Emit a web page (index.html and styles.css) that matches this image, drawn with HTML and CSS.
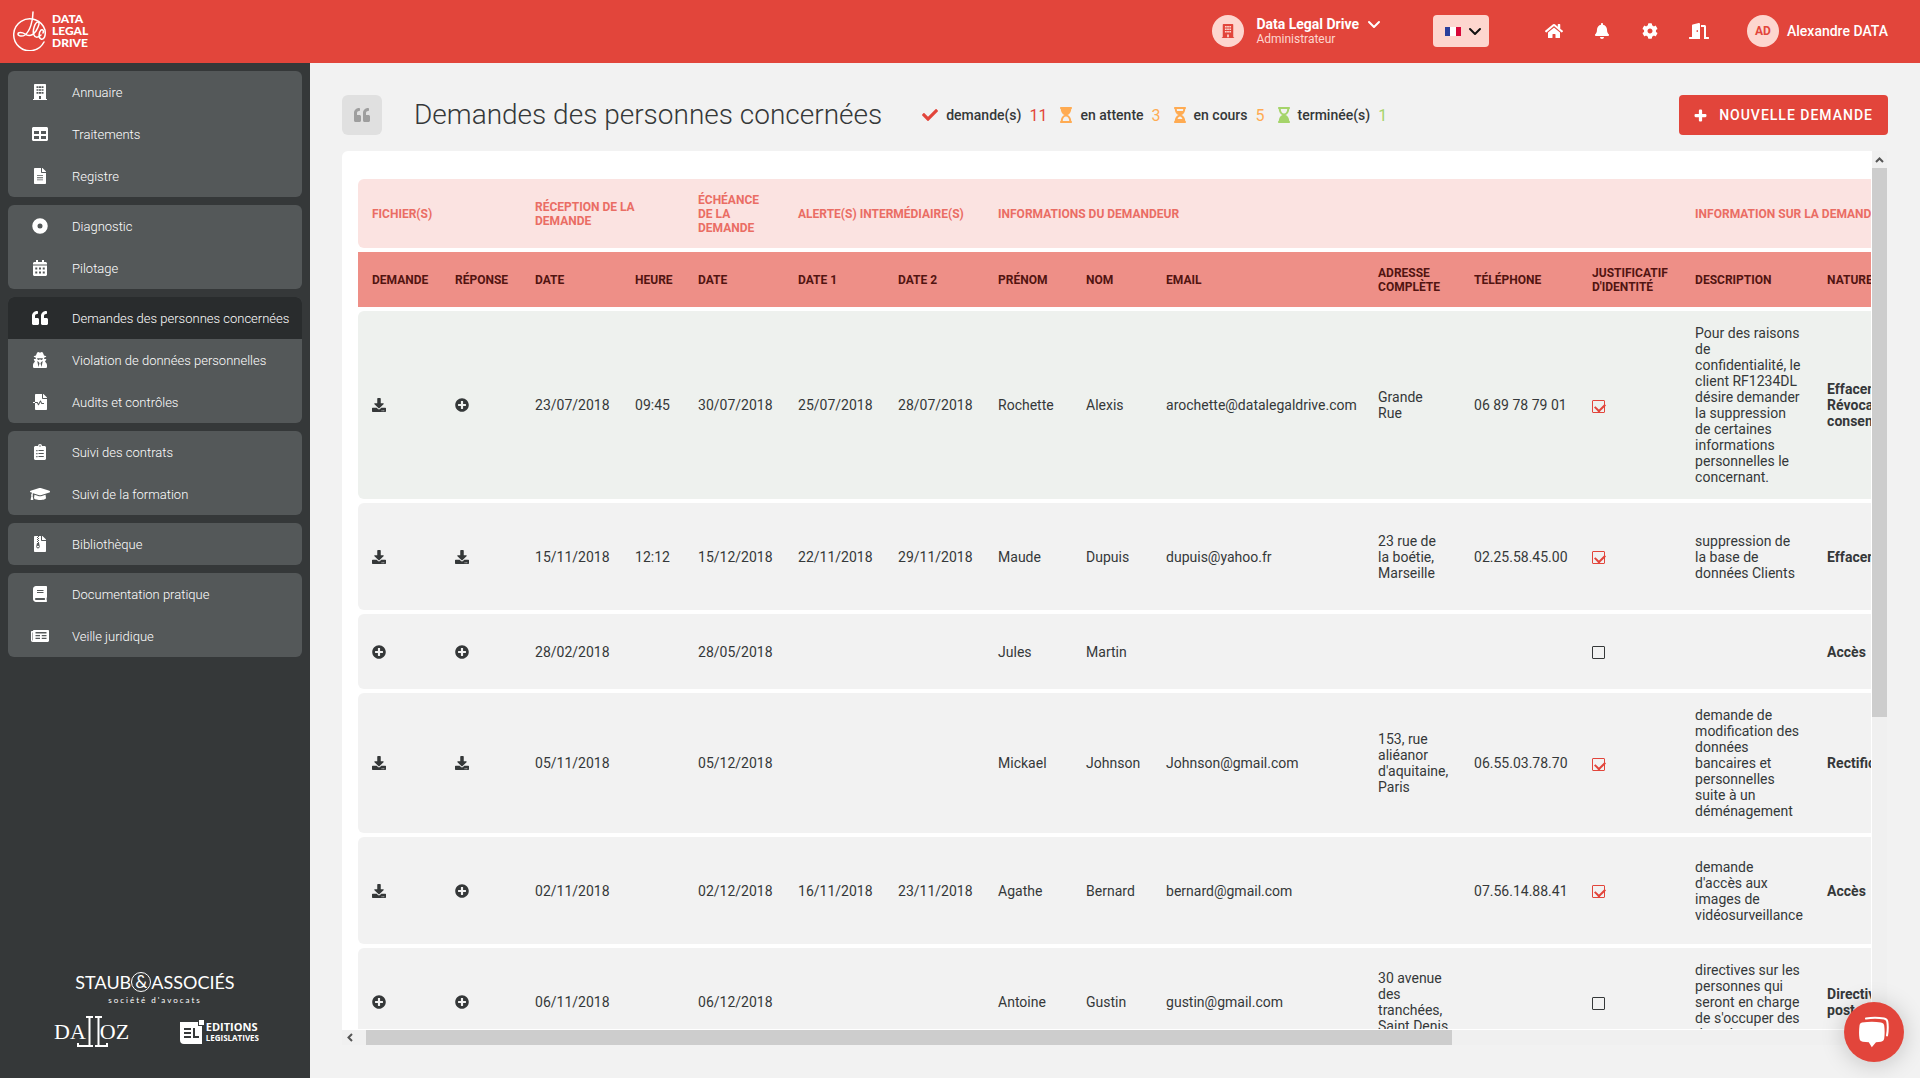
FILE: index.html
```html
<!DOCTYPE html>
<html lang="fr">
<head>
<meta charset="utf-8">
<meta name="viewport" content="width=device-width, initial-scale=1">
<title>Demandes des personnes concernées</title>
<link rel="stylesheet" href="styles.css">
</head>
<body>
<svg class="sprite" aria-hidden="true">
  <symbol id="i-building" viewBox="0 0 448 512"><path fill-rule="evenodd" d="M436 480h-20V24c0-13-11-24-24-24H56C43 0 32 11 32 24v456H12c-7 0-12 5-12 12v20h448v-20c0-7-5-12-12-12zM112 72h64v52h-64zm0 92h64v52h-64zm0 92h64v52h-64zm80-184h64v52h-64zm0 92h64v52h-64zm0 92h64v52h-64zm80-184h64v52h-64zm0 92h64v52h-64zm0 92h64v52h-64zM192 384h64v96h-64z"/></symbol>
  <symbol id="i-table" viewBox="0 0 512 512"><path fill-rule="evenodd" d="M464 32H48C22 32 0 54 0 80v352c0 26 22 48 48 48h416c26 0 48-22 48-48V80c0-26-22-48-48-48zM224 416H64v-96h160zm0-160H64v-96h160zm224 160H288v-96h160zm0-160H288v-96h160z"/></symbol>
  <symbol id="i-file" viewBox="0 0 384 512"><path fill-rule="evenodd" d="M224 136V0H24C11 0 0 11 0 24v464c0 13 11 24 24 24h336c13 0 24-11 24-24V160H248c-13 0-24-11-24-24zm64 256H96v-28h192zm0-68H96v-28h192zm0-68H96v-28h192zM384 122v6H256V0h6c6 0 13 3 17 7l98 98c4 4 7 11 7 17z"/></symbol>
  <symbol id="i-disc" viewBox="0 0 512 512"><path fill-rule="evenodd" d="M256 8a248 248 0 1 0 0 496 248 248 0 0 0 0-496zm0 168a80 80 0 1 1 0 160 80 80 0 0 1 0-160z"/></symbol>
  <symbol id="i-calendar" viewBox="0 0 448 512"><path fill-rule="evenodd" d="M0 464c0 26 22 48 48 48h352c26 0 48-22 48-48V176H0zM72 240h64v60H72zm120 0h64v60h-64zm120 0h64v60h-64zM72 368h64v60H72zm120 0h64v60h-64zm120 0h64v60h-64zM448 144v-32c0-26-22-48-48-48h-48V12c0-7-5-12-12-12h-40c-7 0-12 5-12 12v52H160V12c0-7-5-12-12-12h-40c-7 0-12 5-12 12v52H48C22 64 0 86 0 112v32z"/></symbol>
  <symbol id="i-quote" viewBox="0 0 512 512"><path d="M464 256h-80v-64c0-35.3 28.7-64 64-64h8c13.3 0 24-10.7 24-24V56c0-13.3-10.7-24-24-24h-8c-88.4 0-160 71.6-160 160v240c0 26.5 21.5 48 48 48h128c26.5 0 48-21.5 48-48V304c0-26.5-21.5-48-48-48zm-288 0H96v-64c0-35.3 28.7-64 64-64h8c13.3 0 24-10.7 24-24V56c0-13.3-10.7-24-24-24h-8C71.6 32 0 103.6 0 192v240c0 26.5 21.5 48 48 48h128c26.5 0 48-21.5 48-48V304c0-26.5-21.5-48-48-48z"/></symbol>
  <symbol id="i-secret" viewBox="0 0 448 512"><path fill-rule="evenodd" d="M384 312l40-72c4-8-2-16-12-16h-58c6-20 8-30 8-48 40-9 62-20 62-32 0-14-28-26-72-35C340 64 318 20 300 5c-10-8-24-6-34-1l-26 13c-10 5-22 5-32 0L182 4c-10-5-24-7-34 1-18 15-40 59-52 104-44 9-72 21-72 35 0 12 22 23 62 32 0 18 2 28 8 48H38c-10 0-16 10-13 18l37 72C24 336 0 378 0 426v42c0 24 20 44 44 44h360c24 0 44-20 44-44v-42c0-48-25-90-64-114zM176 480l-40-192 48 32 24 40zm96 0l-32-120 24-40 48-32zM130 200h188c-4 40-26 52-50 52-22 0-34-12-38-30h-12c-4 18-16 30-38 30-24 0-46-12-50-52z"/></symbol>
  <symbol id="i-audit" viewBox="0 0 448 512"><path fill-rule="evenodd" d="M288 136V0H88C75 0 64 11 64 24v232h76c5 0 9 3 11 6l25 50 48-94c6-12 23-12 29 0l35 70h64v32h-74c-5 0-9-3-11-6l-29-58-48 94c-6 12-23 12-29 0l-35-62H64v200c0 13 11 24 24 24h336c13 0 24-11 24-24V160H312c-13 0-24-11-24-24zM0 264c0-4 4-8 8-8h56v32H8c-4 0-8-4-8-8zM448 122v6H320V0h6c6 0 13 3 17 7l98 98c4 4 7 11 7 17z"/></symbol>
  <symbol id="i-clipboard" viewBox="0 0 384 512"><path fill-rule="evenodd" d="M336 64h-80a64 64 0 0 0-128 0H48C22 64 0 86 0 112v352c0 26 22 48 48 48h288c26 0 48-22 48-48V112c0-26-22-48-48-48zM192 40a24 24 0 1 1 0 48 24 24 0 0 1 0-48zM72 192h40v36H72zm72 0h168v32H144zM72 288h40v36H72zm72 0h168v32H144zM72 384h40v36H72zm72 0h168v32H144z"/></symbol>
  <symbol id="i-cap" viewBox="0 0 640 512"><path d="M622 153L343 67c-15-5-31-5-46 0L18 153c-24 7-24 39 0 46l49 15c-11 14-18 30-19 48-9 6-16 15-16 26 0 10 6 19 14 25L20 428c-2 10 5 20 16 20h56c11 0 18-10 16-20L82 313c8-6 14-15 14-25 0-11-6-20-15-25 1-13 7-24 17-31l199 61c9 3 26 6 46 0l279-86c24-8 24-46 0-54zM352 324c-31 9-55 4-64 0l-145-45-15 105c0 35 86 64 192 64s192-29 192-64l-15-105z"/></symbol>
  <symbol id="i-zip" viewBox="0 0 384 512"><path fill-rule="evenodd" d="M224 136V0h-64v32h-32V0H24C11 0 0 11 0 24v464c0 13 11 24 24 24h336c13 0 24-11 24-24V160H248c-13 0-24-11-24-24zM96 32h32v32H96zm32 32h32v32h-32zM96 96h32v32H96zm32 32h32v32h-32zM96 160h32v32H96zm32 32h32v32h-32zM96 224h66l20 98c10 50-28 78-54 78-28 0-64-28-54-78zm32 90a32 24 0 1 0 0 50 32 24 0 0 0 0-50zM384 122v6H256V0h6c6 0 13 3 17 7l98 98c4 4 7 11 7 17z"/></symbol>
  <symbol id="i-book" viewBox="0 0 448 512"><path fill-rule="evenodd" d="M448 360V24c0-13-11-24-24-24H96C43 0 0 43 0 96v320c0 53 43 96 96 96h328c13 0 24-11 24-24v-16c0-8-4-14-9-19-4-15-4-59 0-74 5-4 9-11 9-19zM128 128h208v28H128zm0 64h208v28H128zm253 256H96c-43 0-43-64 0-64h285c-2 17-2 47 0 64z"/></symbol>
  <symbol id="i-news" viewBox="0 0 576 512"><path fill-rule="evenodd" d="M552 64H88c-13 0-24 11-24 24v8H24c-13 0-24 11-24 24v272c0 31 25 56 56 56h472c26 0 48-22 48-48V88c0-13-11-24-24-24zM56 400c-4 0-8-4-8-8V144h16v248c0 4-4 8-8 8zm88-272h352v48H144zm0 96h144v40H144zm0 88h144v40H144zm200-88h152v40H344zm0 88h152v40H344z"/></symbol>
  <symbol id="i-home" viewBox="0 0 576 512"><path d="M280.37 148.26L96 300.11V464a16 16 0 0 0 16 16l112.06-.29a16 16 0 0 0 15.92-16V368a16 16 0 0 1 16-16h64a16 16 0 0 1 16 16v95.64a16 16 0 0 0 16 16.05L464 480a16 16 0 0 0 16-16V300L295.67 148.26a12.19 12.19 0 0 0-15.3 0zM571.6 251.47L488 182.56V44.05a12 12 0 0 0-12-12h-56a12 12 0 0 0-12 12v72.61L318.47 43a48 48 0 0 0-61 0L4.34 251.47a12 12 0 0 0-1.6 16.9l25.5 31A12 12 0 0 0 45.15 301l235.22-193.74a12.19 12.19 0 0 1 15.3 0L530.9 301a12 12 0 0 0 16.9-1.6l25.5-31a12 12 0 0 0-1.7-16.93z"/></symbol>
  <symbol id="i-bell" viewBox="0 0 448 512"><path d="M224 512c35.32 0 63.97-28.65 63.97-64H160.03c0 35.35 28.65 64 63.97 64zm215.39-149.71c-19.32-20.76-55.47-51.99-55.47-154.29 0-77.7-54.48-139.9-127.94-155.16V32c0-17.67-14.32-32-31.98-32s-31.98 14.33-31.98 32v20.84C118.56 68.1 64.08 130.3 64.08 208c0 102.3-36.15 133.53-55.47 154.29-6 6.45-8.66 14.16-8.61 21.71.11 16.4 12.98 32 32.1 32h383.8c19.12 0 32-15.6 32.1-32 .05-7.55-2.61-15.27-8.61-21.71z"/></symbol>
  <symbol id="i-cog" viewBox="0 0 512 512"><path d="M487.4 315.7l-42.6-24.6c4.3-23.2 4.3-47 0-70.2l42.6-24.6c4.9-2.8 7.1-8.6 5.5-14-11.1-35.6-30-67.8-54.7-94.6-3.8-4.1-10-5.1-14.8-2.3L380.8 110c-17.9-15.4-38.5-27.3-60.8-35.1V25.8c0-5.6-3.9-10.5-9.4-11.7-36.7-8.2-74.3-7.8-109.2 0-5.5 1.2-9.4 6.1-9.4 11.7V75c-22.2 7.9-42.8 19.8-60.8 35.1L88.7 85.5c-4.9-2.8-11-1.9-14.8 2.3-24.7 26.7-43.6 58.9-54.7 94.6-1.7 5.4.6 11.2 5.5 14L67.3 221c-4.3 23.2-4.3 47 0 70.2l-42.6 24.6c-4.9 2.8-7.1 8.6-5.5 14 11.1 35.6 30 67.8 54.7 94.6 3.8 4.1 10 5.1 14.8 2.3l42.6-24.6c17.9 15.4 38.5 27.3 60.8 35.1v49.2c0 5.6 3.9 10.5 9.4 11.7 36.7 8.2 74.3 7.8 109.2 0 5.5-1.2 9.4-6.1 9.4-11.7v-49.2c22.2-7.9 42.8-19.8 60.8-35.1l42.6 24.6c4.9 2.8 11 1.9 14.8-2.3 24.7-26.7 43.6-58.9 54.7-94.6 1.5-5.5-.7-11.3-5.6-14.1zM256 336c-44.1 0-80-35.9-80-80s35.9-80 80-80 80 35.9 80 80-35.9 80-80 80z"/></symbol>
  <symbol id="i-door" viewBox="0 0 640 512"><path fill-rule="evenodd" d="M624 448h-80V113c0-27-21-49-48-49H384v64h96v384h144c9 0 16-7 16-16v-32c0-9-7-16-16-16zM312 1L120 50c-14 4-24 16-24 31v367H16c-9 0-16 7-16 16v32c0 9 7 16 16 16h336V33c0-21-20-37-40-32zM264 288c-13 0-24-14-24-32s11-32 24-32 24 14 24 32-11 32-24 32z"/></symbol>
  <symbol id="i-chevron" viewBox="0 0 14 9"><path fill="none" stroke="currentColor" stroke-width="2" stroke-linecap="round" stroke-linejoin="round" d="M2 2l5 5 5-5"/></symbol>
  <symbol id="i-check" viewBox="0 0 512 512"><path d="M173.900 439.400L7.500 273c-10-10-10-26.200 0-36.200l36.200-36.200c10-10 26.200-10 36.200 0L192 312.700 432.100 72.600c10-10 26.200-10 36.200 0l36.200 36.200c10 10 10 26.200 0 36.200L210.100 439.400c-10 10-26.200 10-36.200 0z"/></symbol>
  <symbol id="i-glass-start" viewBox="0 0 384 512"><path fill-rule="evenodd" d="M360 0H24C11 0 0 11 0 24v16c0 13 11 24 24 24 0 91 51 167 121 192C75 281 24 357 24 448c-13 0-24 11-24 24v16c0 13 11 24 24 24h336c13 0 24-11 24-24v-16c0-13-11-24-24-24 0-91-51-167-121-192 70-25 121-101 121-192 13 0 24-11 24-24V24c0-13-11-24-24-24zM88 448c0-78 46-144 104-144s104 66 104 144z"/></symbol>
  <symbol id="i-glass-half" viewBox="0 0 384 512"><path fill-rule="evenodd" d="M360 0H24C11 0 0 11 0 24v16c0 13 11 24 24 24 0 91 51 167 121 192C75 281 24 357 24 448c-13 0-24 11-24 24v16c0 13 11 24 24 24h336c13 0 24-11 24-24v-16c0-13-11-24-24-24 0-91-51-167-121-192 70-25 121-101 121-192 13 0 24-11 24-24V24c0-13-11-24-24-24zM88 64h208c0 24-4 46-12 66H100c-8-20-12-42-12-66zm24 320c18-48 47-80 80-80s62 32 80 80z"/></symbol>
  <symbol id="i-glass-end" viewBox="0 0 384 512"><path fill-rule="evenodd" d="M360 0H24C11 0 0 11 0 24v16c0 13 11 24 24 24 0 91 51 167 121 192C75 281 24 357 24 448c-13 0-24 11-24 24v16c0 13 11 24 24 24h336c13 0 24-11 24-24v-16c0-13-11-24-24-24 0-91-51-167-121-192 70-25 121-101 121-192 13 0 24-11 24-24V24c0-13-11-24-24-24zM88 64h208c0 78-46 144-104 144S88 142 88 64z"/></symbol>
  <symbol id="i-plus" viewBox="0 0 12 12"><path d="M5.500 0.500h1a1 1 0 0 1 1 1v3h3a1 1 0 0 1 1 1v1a1 1 0 0 1-1 1h-3v3a1 1 0 0 1-1 1h-1a1 1 0 0 1-1-1v-3h-3a1 1 0 0 1-1-1v-1a1 1 0 0 1 1-1h3v-3a1 1 0 0 1 1-1z"/></symbol>
  <symbol id="i-add" viewBox="0 0 512 512"><path d="M256 8C119 8 8 119 8 256s111 248 248 248 248-111 248-248S393 8 256 8zm144 276c0 6.600-5.400 12-12 12h-92v92c0 6.600-5.400 12-12 12h-56c-6.600 0-12-5.400-12-12v-92h-92c-6.600 0-12-5.400-12-12v-56c0-6.600 5.400-12 12-12h92v-92c0-6.600 5.400-12 12-12h56c6.600 0 12 5.400 12 12v92h92c6.600 0 12 5.400 12 12v56z"/></symbol>
  <symbol id="i-download" viewBox="0 0 512 512"><path d="M216 0h80c13.300 0 24 10.700 24 24v168h87.700c17.800 0 26.700 21.500 14.100 34.100L269.700 378.300c-7.500 7.500-19.800 7.500-27.300 0L90.100 226.100c-12.600-12.600-3.700-34.100 14.100-34.100H192V24c0-13.300 10.700-24 24-24zm296 376v112c0 13.300-10.700 24-24 24H24c-13.300 0-24-10.700-24-24V376c0-13.300 10.700-24 24-24h146.700l49 49c20.100 20.100 52.500 20.100 72.600 0l49-49H488c13.300 0 24 10.700 24 24zm-124 88c0-11-9-20-20-20s-20 9-20 20 9 20 20 20 20-9 20-20zm64 0c0-11-9-20-20-20s-20 9-20 20 9 20 20 20 20-9 20-20z"/></symbol>
</svg>

<header class="topbar">
  <a class="brand" href="#" aria-label="Data Legal Drive">
    <svg class="brand-mark" viewBox="0 0 34 40" aria-hidden="true"><g fill="none" stroke="#fff" stroke-width="1.500" stroke-linecap="round"><path d="M32 31A16 16 0 1 1 33 19c1 6-1 10-4 9s-2-7 0-9c2-1 3 1 2 3"/><path d="M21 1c0 9-3 19-8 23-3 2-7 1-7-1s4-2 7 0c4 3 8 1 11-3 3-5 4-9 2-9-3 0-6 9-4 13 1 3 4 3 7 0"/></g></svg>
    <span class="brand-name">DATA<br>LEGAL<br>DRIVE</span>
  </a>
  <div class="top-tools">
    <button class="company" type="button">
      <span class="avatar"><svg class="ic14"><use href="#i-building"/></svg></span>
      <span class="company-text"><strong>Data Legal Drive <svg class="chev"><use href="#i-chevron"/></svg></strong><small>Administrateur</small></span>
    </button>
    <div class="lang">
      <svg class="flag" viewBox="0 0 16 9" aria-hidden="true"><path fill="#fff" d="M0 0h16v9H0z"/><path fill="#2b3f9c" d="M0 0h5v9H0z"/><path fill="#d8083a" d="M11 0h5v9h-5z"/></svg>
      <svg class="chev"><use href="#i-chevron"/></svg>
      <select aria-label="Langue"><option></option></select>
    </div>
    <nav class="shortcuts" aria-label="Raccourcis">
      <a href="#" aria-label="Accueil"><svg><use href="#i-home"/></svg></a>
      <a href="#" aria-label="Notifications"><svg><use href="#i-bell"/></svg></a>
      <a href="#" aria-label="Paramètres"><svg><use href="#i-cog"/></svg></a>
      <a href="#" aria-label="Déconnexion"><svg><use href="#i-door"/></svg></a>
    </nav>
    <a class="user" href="#"><span class="avatar">AD</span>Alexandre DATA</a>
  </div>
</header>

<div class="layout">
  <aside class="sidebar">
    <nav class="menu" aria-label="Menu principal">
      <div class="menu-group">
        <a href="#"><svg><use href="#i-building"/></svg>Annuaire</a>
        <a href="#"><svg><use href="#i-table"/></svg>Traitements</a>
        <a href="#"><svg><use href="#i-file"/></svg>Registre</a>
      </div>
      <div class="menu-group">
        <a href="#"><svg><use href="#i-disc"/></svg>Diagnostic</a>
        <a href="#"><svg><use href="#i-calendar"/></svg>Pilotage</a>
      </div>
      <div class="menu-group">
        <a class="active" href="#" aria-current="page"><svg><use href="#i-quote"/></svg>Demandes des personnes concernées</a>
        <a href="#"><svg><use href="#i-secret"/></svg>Violation de données personnelles</a>
        <a href="#"><svg><use href="#i-audit"/></svg>Audits et contrôles</a>
      </div>
      <div class="menu-group">
        <a href="#"><svg><use href="#i-clipboard"/></svg>Suivi des contrats</a>
        <a href="#"><svg><use href="#i-cap"/></svg>Suivi de la formation</a>
      </div>
      <div class="menu-group">
        <a href="#"><svg><use href="#i-zip"/></svg>Bibliothèque</a>
      </div>
      <div class="menu-group">
        <a href="#"><svg><use href="#i-book"/></svg>Documentation pratique</a>
        <a href="#"><svg><use href="#i-news"/></svg>Veille juridique</a>
      </div>
    </nav>
    <div class="partners">
      <div class="staub">
        <div class="staub-name">STAUB<span class="amp">&amp;</span>ASSOCIÉS</div>
        <div class="staub-sub">société d'avocats</div>
      </div>
      <div class="partners-row">
        <div class="dalloz">
          <span>DA</span>
          <svg viewBox="0 0 32 32" aria-hidden="true"><path fill="none" stroke="#fff" stroke-width="2" d="M10 1h7M19 1h7M13.500 1v29M22.500 1v29M17 30H2v-3M19 30h12v-3"/></svg>
          <span>OZ</span>
        </div>
        <div class="editions">
          <svg viewBox="0 0 24 24" aria-hidden="true"><path fill="#fff" d="M0 2h18v4h4v18H4a4 4 0 0 1-4-4zM19 0h5v5h-5z"/><path fill="none" stroke="#353839" stroke-width="2" d="M4 9h7M4 13h7M4 17h7M14 8v9h5"/></svg>
          <span><b>EDITIONS</b><i>LEGISLATIVES</i></span>
        </div>
      </div>
    </div>
  </aside>

  <main class="main">
    <div class="page-head">
      <span class="page-icon"><svg><use href="#i-quote"/></svg></span>
      <h1>Demandes des personnes concernées</h1>
      <ul class="stats">
        <li class="red"><svg><use href="#i-check"/></svg>demande(s) <b>11</b></li>
        <li class="orange"><svg><use href="#i-glass-start"/></svg>en attente <b>3</b></li>
        <li class="orange"><svg><use href="#i-glass-half"/></svg>en cours <b>5</b></li>
        <li class="green"><svg><use href="#i-glass-end"/></svg>terminée(s) <b>1</b></li>
      </ul>
      <button class="primary" type="button"><svg><use href="#i-plus"/></svg>NOUVELLE DEMANDE</button>
    </div>

    <div class="panel">
      <div class="viewport">
        <table>
          <colgroup>
            <col class="c-file"><col class="c-answer"><col class="c-date"><col class="c-hour"><col class="c-date"><col class="c-date"><col class="c-date"><col class="c-first"><col class="c-last"><col class="c-mail"><col class="c-addr"><col class="c-tel"><col class="c-proof"><col class="c-desc"><col class="c-nature">
          </colgroup>
          <thead>
            <tr class="groups">
              <th colspan="2">FICHIER(S)</th><th colspan="2">RÉCEPTION DE LA DEMANDE</th><th>ÉCHÉANCE DE LA DEMANDE</th><th colspan="2">ALERTE(S) INTERMÉDIAIRE(S)</th><th colspan="6">INFORMATIONS DU DEMANDEUR</th><th colspan="2">INFORMATION SUR LA DEMANDE</th>
            </tr>
            <tr class="heads">
              <th>DEMANDE</th><th>RÉPONSE</th><th>DATE</th><th>HEURE</th><th>DATE</th><th>DATE 1</th><th>DATE 2</th><th>PRÉNOM</th><th>NOM</th><th>EMAIL</th><th>ADRESSE COMPLÈTE</th><th>TÉLÉPHONE</th><th>JUSTIFICATIF D'IDENTITÉ</th><th>DESCRIPTION</th><th>NATURE</th>
            </tr>
          </thead>
          <tbody>
            <tr class="new">
              <td><button type="button" aria-label="Télécharger"><svg><use href="#i-download"/></svg></button></td><td><button type="button" aria-label="Ajouter"><svg><use href="#i-add"/></svg></button></td>
              <td>23/07/2018</td><td>09:45</td><td>30/07/2018</td><td>25/07/2018</td><td>28/07/2018</td><td>Rochette</td><td>Alexis</td><td>arochette@datalegaldrive.com</td><td>Grande<br>Rue</td><td class="tel">06 89 78 79 01</td><td><input type="checkbox" aria-label="Justificatif d'identité" checked></td><td>Pour des raisons de confidentialité, le client RF1234DL désire demander la suppression de certaines informations personnelles le concernant.</td><td><b>Effacement Révocation du consentement</b></td>
            </tr>
            <tr class="tall">
              <td><button type="button" aria-label="Télécharger"><svg><use href="#i-download"/></svg></button></td><td><button type="button" aria-label="Télécharger"><svg><use href="#i-download"/></svg></button></td>
              <td>15/11/2018</td><td>12:12</td><td>15/12/2018</td><td>22/11/2018</td><td>29/11/2018</td><td>Maude</td><td>Dupuis</td><td>dupuis@yahoo.fr</td><td>23 rue de la boétie, Marseille</td><td class="tel">02.25.58.45.00</td><td><input type="checkbox" aria-label="Justificatif d'identité" checked></td><td>suppression de la base de données Clients</td><td><b>Effacement</b></td>
            </tr>
            <tr>
              <td><button type="button" aria-label="Ajouter"><svg><use href="#i-add"/></svg></button></td><td><button type="button" aria-label="Ajouter"><svg><use href="#i-add"/></svg></button></td>
              <td>28/02/2018</td><td></td><td>28/05/2018</td><td></td><td></td><td>Jules</td><td>Martin</td><td></td><td></td><td></td><td><input type="checkbox" aria-label="Justificatif d'identité"></td><td></td><td><b>Accès</b></td>
            </tr>
            <tr>
              <td><button type="button" aria-label="Télécharger"><svg><use href="#i-download"/></svg></button></td><td><button type="button" aria-label="Télécharger"><svg><use href="#i-download"/></svg></button></td>
              <td>05/11/2018</td><td></td><td>05/12/2018</td><td></td><td></td><td>Mickael</td><td>Johnson</td><td>Johnson@gmail.com</td><td>153, rue aliéanor d'aquitaine, Paris</td><td class="tel">06.55.03.78.70</td><td><input type="checkbox" aria-label="Justificatif d'identité" checked></td><td>demande de modification des données bancaires et personnelles suite à un déménagement</td><td><b>Rectification</b></td>
            </tr>
            <tr class="tall">
              <td><button type="button" aria-label="Télécharger"><svg><use href="#i-download"/></svg></button></td><td><button type="button" aria-label="Ajouter"><svg><use href="#i-add"/></svg></button></td>
              <td>02/11/2018</td><td></td><td>02/12/2018</td><td>16/11/2018</td><td>23/11/2018</td><td>Agathe</td><td>Bernard</td><td>bernard@gmail.com</td><td></td><td class="tel">07.56.14.88.41</td><td><input type="checkbox" aria-label="Justificatif d'identité" checked></td><td>demande d'accès aux images de vidéosurveillance</td><td><b>Accès</b></td>
            </tr>
            <tr class="tall">
              <td><button type="button" aria-label="Ajouter"><svg><use href="#i-add"/></svg></button></td><td><button type="button" aria-label="Ajouter"><svg><use href="#i-add"/></svg></button></td>
              <td>06/11/2018</td><td></td><td>06/12/2018</td><td></td><td></td><td>Antoine</td><td>Gustin</td><td>gustin@gmail.com</td><td>30 avenue des tranchées, Saint&nbsp;Denis</td><td></td><td><input type="checkbox" aria-label="Justificatif d'identité"></td><td>directives sur les personnes qui seront en charge de s'occuper des données</td><td><b>Directives<br>post-mortem</b></td>
            </tr>
          </tbody>
        </table>
      </div>
      <div class="vbar" aria-hidden="true"><svg viewBox="0 0 9 6"><path fill="none" stroke="#555" stroke-width="2" d="M1 5l3.500-3.500L8 5"/></svg><span></span></div>
      <div class="hbar" aria-hidden="true"><svg viewBox="0 0 6 9"><path fill="none" stroke="#555" stroke-width="2" d="M5 1L1.500 4.500 5 8"/></svg><span></span></div>
    </div>
  </main>
</div>

<button class="chat" type="button" aria-label="Ouvrir la messagerie">
  <svg viewBox="0 0 32 32" aria-hidden="true"><path fill="none" stroke="#fff" stroke-width="2" stroke-linecap="round" d="M8 2.500c6-1 12-1 18 0 2 .3 3 1.500 3.300 3 .8 5 .8 8-.3 14"/><path fill="#fff" d="M4 6.500c7-1 13-1 19 0 2 .3 3 1.500 3.200 3 .6 5 .6 9 0 13-.3 1.800-1.500 3-3.200 3.200l-5 .6-4.200 5-3-5-6-.6c-2-.2-3-1.400-3.300-3.200-.6-4-.6-8 0-13 .2-1.500 1-2.700 2.500-3z"/></svg>
</button>
</body>
</html>
```

FILE: styles.css
```css
:root {
  --red: #e2453b;
  --dark: #353839;
  --pink: #fdd6cf;
  --grey: #f2f2f2;
}

* { box-sizing: border-box; }

body {
  margin: 0;
  height: 100vh;
  display: flex;
  flex-direction: column;
  overflow: hidden;
  background: var(--grey);
  color: var(--dark);
  font-family: Roboto, "Liberation Sans", sans-serif;
  font-size: 14px;
}

svg { display: block; fill: currentColor; flex: none; }
.sprite { width: 0; height: 0; position: absolute; }
a { color: inherit; text-decoration: none; }
button { font: inherit; color: inherit; border: 0; padding: 0; background: none; cursor: pointer; }

/* Top bar */
.topbar {
  flex: none;
  height: 63px;
  padding: 0 32px 1px 12px;
  display: flex;
  align-items: center;
  justify-content: space-between;
  background: var(--red);
  color: #fff;
}
.brand { display: flex; align-items: center; gap: 6px; }
.brand-mark { width: 34px; height: 40px; }
.brand-name { font: 900 12px/12px Lato, sans-serif; }
.top-tools { display: flex; align-items: center; font-weight: 500; }
.company { display: flex; align-items: center; gap: 12px; text-align: left; }
.company strong { display: flex; align-items: center; gap: 8px; font-weight: 700; line-height: 16px; }
.company small { display: block; font-size: 12px; line-height: 14px; font-weight: 400; color: #fdd6cf; }
.avatar {
  width: 32px;
  height: 32px;
  border-radius: 50%;
  display: flex;
  align-items: center;
  justify-content: center;
  background: var(--pink);
  color: var(--red);
  font-size: 12px;
  font-weight: 700;
}
.ic14 { width: 14px; height: 14px; }
.chev { width: 14px; height: 9px; }
.lang {
  position: relative;
  width: 56px;
  height: 32px;
  margin: 0 56px 0 52px;
  padding: 0 7px 0 12px;
  border-radius: 4px;
  display: flex;
  align-items: center;
  justify-content: space-between;
  background: var(--pink);
  color: #111;
}
.flag { width: 16px; height: 9px; }
.lang select {
  position: absolute;
  inset: 0;
  width: 100%;
  height: 100%;
  appearance: none;
  border: 0;
  background: transparent;
}
.shortcuts { display: flex; gap: 30px; margin-right: 38px; }
.shortcuts svg { width: 18px; height: 16px; }
.shortcuts a:last-child svg { width: 20px; }
.user { display: flex; align-items: center; gap: 8px; }

/* Sidebar */
.layout { flex: 1; min-height: 0; display: flex; }
.sidebar {
  flex: none;
  width: 310px;
  padding: 8px 8px 30px;
  display: flex;
  flex-direction: column;
  justify-content: space-between;
  background: var(--dark);
  color: #fff;
}
.menu { display: flex; flex-direction: column; gap: 8px; }
.menu-group { border-radius: 6px; overflow: hidden; background: #545859; }
.menu a {
  display: flex;
  align-items: center;
  gap: 22px;
  height: 42px;
  padding-left: 22px;
  font-size: 13px;
  font-weight: 300;
}
.menu a.active { background: #292c2d; }
.menu svg { width: 20px; height: 16px; }

.partners { display: flex; flex-direction: column; gap: 8px; }
.staub { text-align: center; }
.staub-name {
  display: flex;
  justify-content: center;
  align-items: center;
  font: 400 18px/20px Lato, sans-serif;
}
.amp {
  width: 20px;
  height: 20px;
  border: 1px solid #fff;
  border-radius: 50%;
  font-size: 17px;
  line-height: 18px;
}
.staub-sub { font: 8px/16px Lato, sans-serif; letter-spacing: 2px; }
.partners-row { display: flex; justify-content: space-between; align-items: center; padding: 0 43px 0 46px; }
.dalloz { display: flex; align-items: center; font: 22px/32px "Liberation Serif", serif; }
.dalloz svg { width: 32px; height: 32px; margin: 0 -8px 0 -10px; }
.editions { display: flex; align-items: center; gap: 2px; }
.editions svg { width: 24px; height: 24px; }
.editions b, .editions i { display: block; font-style: normal; font-family: "Open Sans", sans-serif; font-weight: 700; }
.editions b { font-size: 11px; line-height: 12px; }
.editions i { font-size: 8px; line-height: 10px; }

/* Page heading */
.main {
  flex: 1;
  min-width: 0;
  padding: 32px;
  display: flex;
  flex-direction: column;
  gap: 16px;
}
.page-head { display: flex; align-items: center; height: 40px; flex: none; }
.page-icon {
  width: 40px;
  height: 40px;
  border-radius: 6px;
  display: flex;
  align-items: center;
  justify-content: center;
  background: #e0e0e0;
  color: #9e9e9e;
}
.page-icon svg { width: 16px; height: 16px; }
h1 { margin: 0 40px 0 32px; font-size: 28px; line-height: 40px; font-weight: 300; white-space: nowrap; }
.stats { list-style: none; margin: 0; padding: 0; display: flex; gap: 13px; font-weight: 500; }
.stats li { display: flex; align-items: center; gap: 8px; white-space: nowrap; }
.stats svg { width: 12px; height: 16px; }
.stats .red svg { width: 16px; }
.stats b { font-size: 16px; font-weight: 400; }
.red svg, .red b { color: var(--red); }
.orange svg, .orange b { color: #ffab52; }
.green svg, .green b { color: #a5d46a; }
.primary {
  margin-left: auto;
  height: 40px;
  padding: 0 15px;
  border-radius: 4px;
  display: flex;
  align-items: center;
  gap: 12px;
  background: var(--red);
  color: #fff;
  font-weight: 500;
  letter-spacing: 1px;
  white-space: nowrap;
}
.primary svg { width: 13px; height: 13px; }

/* Table panel */
.panel {
  flex: 1;
  min-height: 0;
  display: grid;
  grid-template-columns: minmax(0, 1fr) 16px;
  grid-template-rows: minmax(0, 1fr) 16px;
}
.viewport {
  overflow: hidden;
  padding: 24px 0 0 16px;
  border-right: 1px solid #fff;
  border-bottom: 1px solid #fff;
  border-top-left-radius: 6px;
  background: #fff;
}
.vbar, .hbar { display: flex; align-items: center; background: #f0f0f0; }
.vbar { flex-direction: column; width: 15px; }
.vbar svg { width: 9px; height: 6px; margin: 6px 0 5px; }
.vbar span { width: 100%; height: 62.5%; background: #cdcdcd; }
.hbar { height: 15px; }
.hbar svg { width: 6px; height: 9px; margin: 0 13px 0 5px; }
.hbar span { width: 71%; height: 100%; background: #cdcdcd; }

table { width: 1614px; table-layout: fixed; border-collapse: separate; border-spacing: 0 4px; }
.c-file { width: 83px; }
.c-answer { width: 80px; }
.c-date { width: 100px; }
.c-hour { width: 63px; }
.c-first { width: 88px; }
.c-last { width: 80px; }
.c-mail { width: 212px; }
.c-addr { width: 96px; }
.c-tel { width: 118px; }
.c-proof { width: 103px; }
.c-desc { width: 132px; }
.c-nature { width: 160px; }
th, td { padding: 14px 12px 14px 14px; text-align: left; vertical-align: middle; line-height: 16px; }
th { padding-top: 13px; padding-bottom: 13px; font-size: 12px; line-height: 14px; font-weight: 700; }
.groups th { height: 69px; background: #fbe3e1; color: #ea6d64; }
.heads th { height: 55px; background: #ee8f87; color: #521411; }
td { height: 75px; background: #f2f2f2; }
.tall td { height: 107px; }
.new td { background: #eef1ee; }
.groups th:first-child, td:first-child { border-radius: 6px 0 0 6px; }
.tel { white-space: nowrap; }
td button { display: block; }
td svg { width: 14px; height: 14px; }
td input {
  appearance: none;
  display: block;
  width: 13px;
  height: 13px;
  margin: 2px 0 0;
  border: 1px solid var(--dark);
  border-radius: 1px;
}
td input:checked { border-color: var(--red); }
td input:checked::after {
  content: "";
  display: block;
  width: 8px;
  height: 5px;
  margin: 2px 0 0 2px;
  border: solid var(--red);
  border-width: 0 0 2px 2px;
  transform: rotate(-45deg);
}

.chat {
  position: fixed;
  right: 16px;
  bottom: 16px;
  width: 60px;
  height: 60px;
  border-radius: 50%;
  display: flex;
  align-items: center;
  justify-content: center;
  background: var(--red);
  box-shadow: 0 2px 24px rgba(0, 0, 0, 0.2);
}
.chat svg { width: 32px; height: 32px; }
```
